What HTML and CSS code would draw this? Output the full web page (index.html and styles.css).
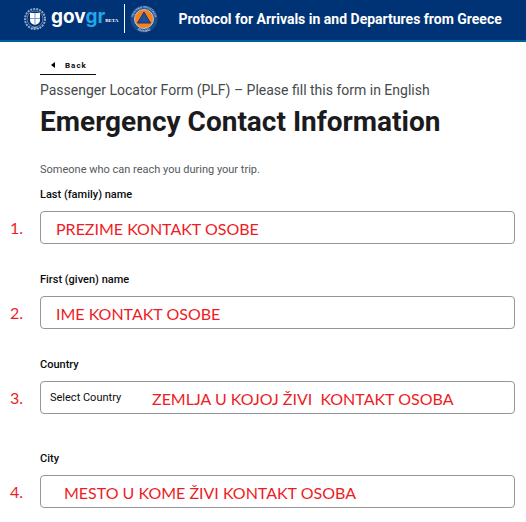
FILE: index.html
```html
<!DOCTYPE html>
<html lang="en">
<head>
<meta charset="utf-8">
<meta name="viewport" content="width=device-width, initial-scale=1">
<title>Emergency Contact Information</title>
<link rel="stylesheet" href="styles.css">
</head>
<body>
<header class="topbar">
  <a class="brand" href="#">
    <svg class="crest" viewBox="0 0 24 24" aria-hidden="true">
      <circle class="crest-wreath" cx="12" cy="12" r="10"/>
      <circle class="crest-inner" cx="12" cy="12" r="8"/>
      <path class="crest-shield" d="M7 6h10v7c0 3-2 4-5 5c-3-1-5-2-5-5z"/>
      <path class="crest-cross" d="M12 6v12M7 11.500h10"/>
      <path class="crest-knot" d="M8 21.500l4-1l4 1"/>
    </svg>
    <span class="wordmark">gov<span class="wordmark-gr">gr</span></span>
    <span class="beta">BETA</span>
  </a>
  <svg class="protection" viewBox="0 0 28 28" aria-hidden="true">
    <defs>
      <path id="ring-top" d="M5 20A10.800 10.800 0 1 1 23 20"/>
      <path id="ring-bottom" d="M4 22A12.800 12.800 0 0 0 24 22"/>
    </defs>
    <circle class="ring" cx="14" cy="14" r="13.500"/>
    <text class="ring-text"><textPath href="#ring-top" startOffset="50%">ΠΟΛΙΤΙΚΗ ΠΡΟΣΤΑΣΙΑ</textPath></text>
    <text class="ring-text"><textPath href="#ring-bottom" startOffset="50%">ΕΛΛΑΔΑΣ</textPath></text>
    <circle class="disc" cx="14" cy="14" r="9.500"/>
    <path class="triangle" d="M14 7L20.500 18H7.500z"/>
  </svg>
  <span class="service">Protocol for Arrivals in and Departures from Greece</span>
</header>

<main class="page">
  <a class="back" href="#"><svg class="back-arrow" viewBox="0 0 4 6" aria-hidden="true"><path d="M4 0v6L0 3z"/></svg>Back</a>
  <p class="form-name">Passenger Locator Form (PLF) – Please fill this form in English</p>
  <h1 class="title">Emergency Contact Information</h1>
  <p class="hint">Someone who can reach you during your trip.</p>

  <form class="fields">
    <div class="field">
      <label class="label" for="last-name">Last (family) name</label>
      <span class="number">1.</span>
      <input class="control" id="last-name" type="text">
      <span class="note">PREZIME KONTAKT OSOBE</span>
    </div>
    <div class="field">
      <label class="label" for="first-name">First (given) name</label>
      <span class="number">2.</span>
      <input class="control" id="first-name" type="text">
      <span class="note">IME KONTAKT OSOBE</span>
    </div>
    <div class="field">
      <label class="label" for="country">Country</label>
      <span class="number">3.</span>
      <select class="control" id="country"><option>Select Country</option></select>
      <span class="note note-after-value">ZEMLJA U KOJOJ ŽIVI  KONTAKT OSOBA</span>
    </div>
    <div class="field field-spaced">
      <label class="label" for="city">City</label>
      <span class="number">4.</span>
      <input class="control" id="city" type="text">
      <span class="note note-indented">MESTO U KOME ŽIVI KONTAKT OSOBA</span>
    </div>
  </form>
</main>
</body>
</html>
```
FILE: styles.css
```css
* {
  box-sizing: border-box;
}

body {
  margin: 0;
  background: #fff;
  color: #0b0c0c;
  font-family: Roboto, "Liberation Sans", sans-serif;
}

.topbar {
  display: flex;
  align-items: center;
  height: 42px;
  padding: 0 16px 3px 23px;
  background: #003375;
  border-bottom: 2px solid #00609c;
  color: #fff;
}

.brand {
  display: flex;
  align-items: center;
  height: 29px;
  padding-right: 6px;
  border-right: 1px solid #fff;
  color: #fff;
  text-decoration: none;
}

.crest {
  width: 24px;
  height: 24px;
  margin-right: 4px;
}

.crest-wreath,
.crest-inner,
.crest-cross,
.crest-knot {
  fill: none;
}

.crest-wreath {
  stroke: #8fa6c8;
  stroke-width: 2;
  stroke-dasharray: 2 1;
}

.crest-inner {
  stroke: #5c7caa;
}

.crest-shield {
  fill: #fff;
}

.crest-cross {
  stroke: #7d97bd;
  stroke-width: 1;
}

.crest-knot {
  stroke: #a9bbd6;
}

.wordmark {
  font: 700 19px/24px Inter, sans-serif;
  padding-bottom: 3px;
}

.wordmark-gr {
  color: #22a7e8;
}

.beta {
  padding-top: 4px;
  font: 700 5px/8px "Liberation Serif", serif;
}

.protection {
  width: 28px;
  height: 28px;
  margin: 0 20px 0 5px;
}

.ring {
  fill: #1c4c88;
}

.ring-text {
  fill: #c3cfe2;
  font: 700 3px Roboto, sans-serif;
  text-anchor: middle;
}

.disc {
  fill: #f58220;
  stroke: #b9c4d8;
}

.triangle {
  fill: #1d4f9c;
  stroke: #20365f;
}

.service {
  font-size: 14px;
  font-weight: 700;
  line-height: 20px;
  white-space: nowrap;
}

.page {
  padding: 14px 11px 16px 0;
}

.back,
.form-name,
.title,
.hint {
  margin: 0 0 0 40px;
}

.back {
  display: flex;
  align-items: center;
  gap: 10px;
  width: 56px;
  height: 19px;
  padding-left: 11px;
  border-bottom: 1px solid #0b0c0c;
  color: #0b0c0c;
  font-size: 8px;
  font-weight: 700;
  letter-spacing: 1px;
  text-decoration: none;
}

.back-arrow {
  width: 4px;
  height: 6px;
}

.form-name {
  padding-top: 5px;
  color: #454a4d;
  font-size: 14px;
  line-height: 20px;
}

.title {
  padding-top: 5px;
  color: #1b1b1d;
  font-size: 28px;
  font-weight: 700;
  line-height: 34px;
}

.hint {
  padding-top: 23px;
  color: #54595c;
  font-size: 11px;
  line-height: 16px;
}

.fields {
  display: grid;
  gap: 28px;
  padding-top: 9px;
}

.field {
  display: grid;
  grid-template-columns: 40px 1fr;
  row-gap: 8px;
}

.field-spaced {
  margin-top: 9px;
}

.label {
  grid-column: 2;
  font-size: 11px;
  font-weight: 500;
  line-height: 16px;
}

.control {
  grid-area: 2 / 2;
  width: 100%;
  height: 33px;
  padding: 0 9px;
  appearance: none;
  background: #fff;
  border: 1px solid #949698;
  border-radius: 4px;
  color: #0b0c0c;
  font: 11px Roboto, "Liberation Sans", sans-serif;
}

.number,
.note {
  color: #ee1c25;
  font: 16px/20px Lato, sans-serif;
  align-self: center;
}

.number {
  grid-area: 2 / 1;
  padding-left: 10px;
}

.note {
  grid-area: 2 / 2;
  padding: 2px 0 0 16px;
  white-space: pre;
  pointer-events: none;
}

.note-after-value {
  padding-left: 112px;
}

.note-indented {
  padding-left: 24px;
}
```
